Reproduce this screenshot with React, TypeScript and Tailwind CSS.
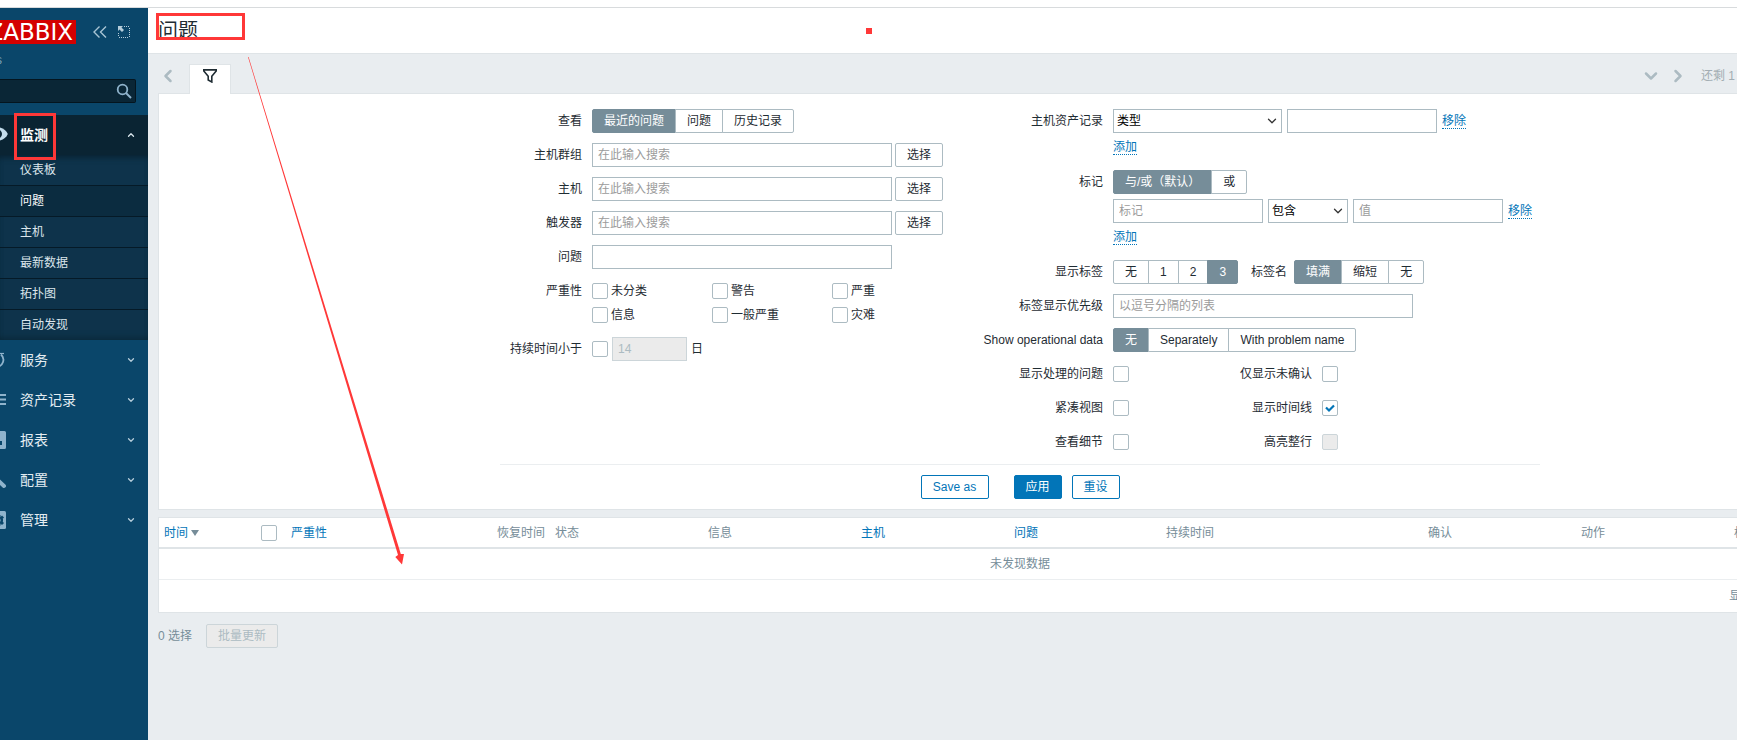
import { useState } from 'react';
import type { ReactNode } from 'react';
import { ChevronDown, ChevronLeft, ChevronRight, ChevronUp } from 'lucide-react';

const subMenu = ['仪表板', '问题', '主机', '最新数据', '拓扑图', '自动发现'];

const menuIcons: Record<string, ReactNode> = {
  服务: (
    <>
      <path d="M-5 5.500A7 7 0 0 0 -3 19A7.200 7.200 0 0 0 1 6.500" fill="none" stroke="currentColor" strokeWidth="1.800" />
      <path d="M0 5.500h4" fill="none" stroke="currentColor" strokeWidth="1.200" />
    </>
  ),
  资产记录: <path d="M-10 7H6M-10 11.500H6M-10 16H6" stroke="currentColor" strokeWidth="2" />,
  报表: (
    <path
      fillRule="evenodd"
      fill="currentColor"
      d="M-10 3H4.500Q6 3 6 4.500V19.500Q6 21 4.500 21H-10ZM-6 8h2v8h-2ZM-0.500 13H2v4H-0.500Z"
    />
  ),
  配置: <path d="M-8 7L4 18" stroke="currentColor" strokeWidth="4" strokeLinecap="round" />,
  管理: (
    <>
      <rect x="-12" y="3" width="18" height="18" rx="1.500" fill="currentColor" />
      <path
        d="M-4 7H0.500V9L2 7.500L4 9.500L2.500 11H3V13.500H2.500L4 15L2 17L0.500 15.500V17.500H-4Z"
        fill="#0a466a"
      />
      <circle cx="-2" cy="12.300" r="2.500" fill="currentColor" />
    </>
  ),
};

const columns = [
  { text: '恢复时间', width: 'w-[58px]' },
  { text: '状态', width: 'w-[153px]' },
  { text: '信息', width: 'w-[153px]' },
  { text: '主机', width: 'w-[153px]', link: true },
  { text: '问题', width: 'w-[152px]', link: true },
  { text: '持续时间', width: 'w-[262px]' },
  { text: '确认', width: 'w-[153px]' },
  { text: '动作', width: 'w-[153px]' },
  { text: '标记', width: '' },
];

function Segmented({ options, initial }: { options: string[]; initial: number }) {
  const [active, setActive] = useState(initial);
  return (
    <div className="flex">
      {options.map((o, i) => (
        <button
          key={o}
          type="button"
          onClick={() => setActive(i)}
          className={`h-6 border px-[11px] leading-[22px] -ml-px first:ml-0 first:rounded-l-xs last:rounded-r-xs ${
            i === active ? 'bg-[#768d99] border-[#768d99] text-white' : 'bg-white border-[#acbbc2]'
          }`}
        >
          {o}
        </button>
      ))}
    </div>
  );
}

function Check({ id, checked, disabled }: { id: string; checked?: boolean; disabled?: boolean }) {
  const [on, setOn] = useState(!!checked);
  return (
    <span className="relative block size-4 shrink-0">
      <input
        id={id}
        type="checkbox"
        aria-label={id}
        checked={on}
        disabled={disabled}
        onChange={() => setOn(!on)}
        className="block size-4 appearance-none rounded-xs border border-[#acbbc2] bg-white disabled:border-[#ccd5d9] disabled:bg-[#ebebeb]"
      />
      {on && (
        <svg viewBox="0 0 16 16" className="pointer-events-none absolute inset-0 size-4">
          <path d="M4 7.500L7 10.500L12 5.500" fill="none" stroke="#0275b8" strokeWidth="2.200" />
        </svg>
      )}
    </span>
  );
}

function TextBox({ id, placeholder, width }: { id: string; placeholder?: string; width: string }) {
  return (
    <input
      id={id}
      type="text"
      aria-label={placeholder || id}
      placeholder={placeholder}
      className={`h-6 border border-[#acbbc2] bg-white px-[5px] outline-none placeholder:text-[#9b9b9b] ${width}`}
    />
  );
}

function Select({ id, value, width }: { id: string; value: string; width: string }) {
  return (
    <span className={`relative block ${width}`}>
      <select
        id={id}
        aria-label={value}
        className="block h-6 w-full appearance-none border border-[#acbbc2] bg-white pl-[3px] text-black outline-none"
      >
        <option>{value}</option>
      </select>
      <ChevronDown size={14} strokeWidth={2.2} className="pointer-events-none absolute top-[5px] right-[3px] text-[#333]" />
    </span>
  );
}

function Row({ label, htmlFor, last, children }: { label: string; htmlFor?: string; last?: boolean; children: ReactNode }) {
  return (
    <div className={`flex gap-[10px] ${last ? '' : 'mb-[10px]'}`}>
      <label htmlFor={htmlFor} className="w-[142px] shrink-0 text-right leading-6 whitespace-nowrap">
        {label}
      </label>
      <div>{children}</div>
    </div>
  );
}

function DotLink({ children }: { children: ReactNode }) {
  return (
    <a href="#" className="border-b border-dotted border-[#0275b8] leading-[14px] text-[#0275b8]">
      {children}
    </a>
  );
}

function Sidebar() {
  return (
    <aside className="w-[148px] shrink-0 overflow-hidden bg-[#0a466a] text-white">
      <div className="flex items-center pt-3">
        <div className="flex h-6 w-[76px] justify-end overflow-hidden bg-[#d40000] pr-[3px] font-['DejaVu_Sans'] text-[23px] leading-6">
          ZABBIX
        </div>
        <button type="button" aria-label="收起" className="ml-[17px] text-[#a8c4d4]">
          <svg width="14" height="12" viewBox="0 0 14 12" fill="none" stroke="currentColor" strokeWidth="1.400">
            <path d="M6.500 0.500L1 6L6.500 11.500M13 0.500L7.500 6L13 11.500" />
          </svg>
        </button>
        <button type="button" aria-label="全屏" className="ml-[11px] text-[#b5cddb]">
          <svg width="12" height="12" viewBox="0 0 12 12">
            <path d="M6 0.500H12M11.500 2V12M10 11.500H0M0.500 10V6" fill="none" stroke="currentColor" strokeDasharray="1 1" />
            <path d="M0 0H5L3.500 1.500L6 4L4 6L1.500 3.500L0 5Z" fill="currentColor" />
          </svg>
        </button>
      </div>
      <div className="flex h-[35px] w-[2px] items-center justify-end overflow-hidden pb-1 leading-4 text-[#7fa3b9]">s</div>
      <div className="relative mr-3 h-6">
        <input
          type="text"
          aria-label="搜索"
          className="block h-6 w-full rounded-r-xs border border-l-0 border-[#04151f] bg-[#0a2636] pr-6 pl-2 outline-none"
        />
        <svg width="16" height="16" viewBox="0 0 16 16" className="absolute top-1 right-1 text-[#8fb3cc]">
          <circle cx="6.500" cy="6.500" r="4.800" fill="none" stroke="currentColor" strokeWidth="1.800" />
          <path d="M10 10L15 15" stroke="currentColor" strokeWidth="2" />
        </svg>
      </div>

      <nav className="mt-3">
        <button type="button" className="flex h-10 w-full items-center bg-[#0a2433] pr-3 text-left text-sm font-bold">
          <svg width="8" height="24" viewBox="0 0 8 24" className="mr-3 text-[#c3dcec]">
            <path d="M-4 4C2 4 6 7 7.800 11C6 15 2 18 -4 18Z" fill="currentColor" />
            <circle cx="-2.500" cy="11" r="4.500" fill="#0a2433" />
          </svg>
          <span className="flex-1">监测</span>
          <ChevronUp size={10} strokeWidth={3} className="text-[#dbe7ee]" />
        </button>
        <ul className="bg-[#0e334b] shadow-[inset_0_6px_6px_-4px_#08202f,inset_0_-6px_6px_-4px_#0a2839]">
          {subMenu.map((item) => (
            <li key={item} className="border-b border-[#051a27] last:border-b-0">
              <a
                href="#"
                className={`block h-[30px] pl-5 leading-[30px] ${item === '问题' ? 'bg-[#0b2c40] text-white' : 'text-[#dce6ec]'}`}
              >
                {item}
              </a>
            </li>
          ))}
        </ul>
        {Object.keys(menuIcons).map((item) => (
          <button key={item} type="button" className="flex h-10 w-full items-center pr-3 text-left text-sm text-[#e4edf2]">
            <svg width="8" height="24" viewBox="0 0 8 24" className="mr-3 text-[#8fb3cc]">
              {menuIcons[item]}
            </svg>
            <span className="flex-1">{item}</span>
            <ChevronDown size={10} strokeWidth={3} className="text-[#b5cddb]" />
          </button>
        ))}
      </nav>
    </aside>
  );
}

function Filter() {
  return (
    <form className="border border-[#dfe4e7] bg-white pt-[15px] pb-[10px]" onSubmit={(e) => e.preventDefault()}>
      <div className="mx-auto max-w-[1040px]">
        <div className="grid grid-cols-[461px_1fr]">
          <div className="-ml-[60px]">
            <Row label="查看">
              <Segmented options={['最近的问题', '问题', '历史记录']} initial={0} />
            </Row>
            {['主机群组', '主机', '触发器'].map((l) => (
              <Row key={l} label={l} htmlFor={l}>
                <div className="flex gap-[3px]">
                  <TextBox id={l} placeholder="在此输入搜索" width="w-[300px]" />
                  <button type="button" className="h-6 w-12 rounded-xs border border-[#acbbc2]">
                    选择
                  </button>
                </div>
              </Row>
            ))}
            <Row label="问题" htmlFor="问题名">
              <TextBox id="问题名" width="w-[300px]" />
            </Row>
            <Row label="严重性">
              <div className="grid grid-cols-[120px_120px_120px]">
                {['未分类', '警告', '严重', '信息', '一般严重', '灾难'].map((s) => (
                  <div key={s} className="flex h-6 items-center gap-[3px]">
                    <Check id={s} />
                    <label htmlFor={s}>{s}</label>
                  </div>
                ))}
              </div>
            </Row>
            <Row label="持续时间小于" htmlFor="持续时间小于" last>
              <div className="flex items-center gap-1">
                <Check id="持续时间小于" />
                <input
                  type="text"
                  aria-label="天数"
                  disabled
                  defaultValue="14"
                  className="h-6 w-[75px] border border-[#ccd5d9] bg-[#ebebeb] px-[5px] text-[#acbbc2]"
                />
                <span>日</span>
              </div>
            </Row>
          </div>

          <div>
            <Row label="主机资产记录" htmlFor="资产类型">
              <div className="flex items-center gap-[5px]">
                <Select id="资产类型" value="类型" width="w-[169px]" />
                <TextBox id="资产值" width="w-[150px]" />
                <DotLink>移除</DotLink>
              </div>
              <div className="flex h-[27px] items-center pt-px">
                <DotLink>添加</DotLink>
              </div>
            </Row>
            <Row label="标记">
              <Segmented options={['与/或（默认）', '或']} initial={0} />
              <div className="mt-[5px] flex items-center gap-[5px]">
                <TextBox id="标记名" placeholder="标记" width="w-[150px]" />
                <Select id="标记条件" value="包含" width="w-20" />
                <TextBox id="标记值" placeholder="值" width="w-[150px]" />
                <DotLink>移除</DotLink>
              </div>
              <div className="flex h-[27px] items-center pt-px">
                <DotLink>添加</DotLink>
              </div>
            </Row>
            <Row label="显示标签">
              <div className="flex items-center">
                <Segmented options={['无', '1', '2', '3']} initial={3} />
                <span className="mr-[7px] ml-[13px]">标签名</span>
                <Segmented options={['填满', '缩短', '无']} initial={0} />
              </div>
            </Row>
            <Row label="标签显示优先级" htmlFor="优先级">
              <TextBox id="优先级" placeholder="以逗号分隔的列表" width="w-[300px]" />
            </Row>
            <Row label="Show operational data">
              <Segmented options={['无', 'Separately', 'With problem name']} initial={0} />
            </Row>
            {[
              ['显示处理的问题', '仅显示未确认'],
              ['紧凑视图', '显示时间线'],
              ['查看细节', '高亮整行'],
            ].map(([a, b]) => (
              <Row key={a} label={a} htmlFor={a}>
                <div className="flex h-6 items-center">
                  <Check id={a} />
                  <label htmlFor={b} className="mr-[10px] w-[183px] text-right">
                    {b}
                  </label>
                  <Check id={b} checked={b === '显示时间线'} disabled={b === '高亮整行'} />
                </div>
              </Row>
            ))}
          </div>
        </div>
        <div className="flex justify-center gap-[10px] border-t border-[#ebeef0] pt-[10px] text-[#0275b8]">
          <button type="button" className="mr-[15px] h-6 w-[68px] rounded-xs border border-[#0275b8]">
            Save as
          </button>
          <button type="submit" className="h-6 w-12 rounded-xs border border-[#0275b8] bg-[#0275b8] text-white">
            应用
          </button>
          <button type="reset" className="h-6 w-12 rounded-xs border border-[#0275b8]">
            重设
          </button>
        </div>
      </div>
    </form>
  );
}

function ProblemTable() {
  return (
    <div className="mt-[7px] border border-[#dfe4e7] bg-white text-[#768d99]">
      <table className="w-full table-fixed border-collapse text-left">
        <thead>
          <tr className="h-[30px] border-b-2 border-[#dfe4e7] whitespace-nowrap">
            <th className="w-[102px] pl-[5px] font-normal">
              <a href="#" className="flex items-center gap-[3px] text-[#0275b8]">
                时间
                <svg width="8" height="6" viewBox="0 0 8 6">
                  <path d="M0 0H8L4 6Z" fill="#768d99" />
                </svg>
              </a>
            </th>
            <th className="w-[30px]">
              <Check id="全选" />
            </th>
            <th className="w-[206px] font-normal text-[#0275b8]">
              <a href="#">严重性</a>
            </th>
            {columns.map((c) => (
              <th key={c.text} className={`font-normal ${c.width}`}>
                {c.link ? (
                  <a href="#" className="text-[#0275b8]">
                    {c.text}
                  </a>
                ) : (
                  c.text
                )}
              </th>
            ))}
          </tr>
        </thead>
        <tbody>
          <tr className="h-[31px] border-b border-[#ebeef0]">
            <td colSpan={12} className="text-center">
              未发现数据
            </td>
          </tr>
        </tbody>
      </table>
      <div className="h-8 pr-[5px] text-right leading-8">显示 已自动发现的 0 中的 0</div>
    </div>
  );
}

export default function App() {
  return (
    <div className="relative flex min-h-screen flex-col overflow-hidden bg-white pt-[7px] font-['Liberation_Sans','Noto_Sans_CJK_SC',sans-serif] text-xs text-[#1f2c33]">
      <div className="flex flex-1 border-t border-[#d8dbdd]">
        <Sidebar />
        <main className="min-w-0 flex-1 overflow-hidden bg-[#e9edf0]">
          {/* content is wider than the window and runs off the right edge */}
          <div className="-mr-[155px]">
            <header className="h-[46px] border-b border-[#dfe4e7] bg-white px-[10px]">
              <h1 className="text-xl leading-[46px]">问题</h1>
            </header>
            <div className="px-[10px]">
              <div className="flex h-[39px] items-end text-[#acbbc2]">
                <button type="button" aria-label="上一个" className="mr-[11px] mb-[7px]">
                  <ChevronLeft size={20} strokeWidth={3} />
                </button>
                <button
                  type="button"
                  aria-label="过滤器"
                  className="relative z-10 -mb-px flex h-[30px] w-[42px] items-center justify-center border border-b-0 border-[#dfe4e7] bg-white pb-[7px] text-[#1f2c33]"
                >
                  <svg width="14" height="14" viewBox="0 0 14 14" fill="none" stroke="currentColor" strokeWidth="1.600">
                    <path d="M0.800 0.900H13.200V2L8.800 7.300V13L5.200 11V7.300L0.800 2Z" />
                  </svg>
                </button>
                <div className="mb-[7px] ml-auto flex w-[241px] items-center gap-[7px]">
                  <button type="button" aria-label="展开">
                    <ChevronDown size={20} strokeWidth={3} />
                  </button>
                  <button type="button" aria-label="下一个">
                    <ChevronRight size={20} strokeWidth={3} />
                  </button>
                  <span className="ml-[6px] text-[#a3adb3]">还剩 1</span>
                </div>
              </div>
              <Filter />
              <ProblemTable />
              <div className="mt-[11px] flex items-center gap-[14px] text-[#768d99]">
                <span>0 选择</span>
                <button type="button" disabled className="h-6 rounded-xs border border-[#ccd5d9] bg-[#ebebeb] px-[11px] text-[#acbbc2]">
                  批量更新
                </button>
              </div>
            </div>
          </div>
        </main>
      </div>

      {/* red marks over the page */}
      <svg width="440" height="600" className="pointer-events-none absolute top-0 left-0 z-20" fill="none">
        <rect x="157.500" y="14.500" width="86" height="24" stroke="#ff3838" strokeWidth="3" />
        <rect x="15.500" y="114.500" width="39" height="44" stroke="#ff3838" strokeWidth="3" />
        <path d="M248 57L248.600 57L400.800 554L404 554L402 564.500L395.300 557L398 555Z" fill="#ff3838" />
      </svg>
      <span className="pointer-events-none absolute top-7 left-1/2 z-20 -ml-[3px] size-[6px] bg-[#ff3838]" />
    </div>
  );
}
